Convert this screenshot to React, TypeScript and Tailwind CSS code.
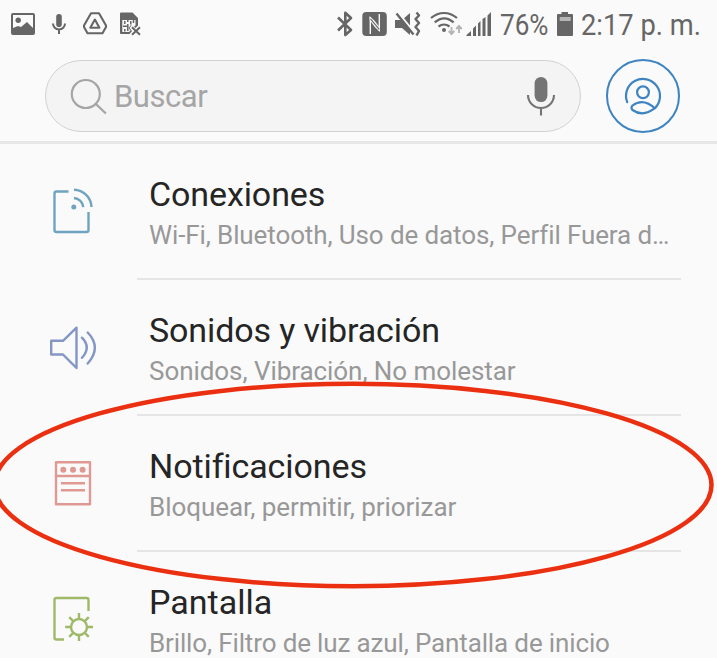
import type { ReactNode } from "react";

type Setting = { title: string; subtitle: string; icon: ReactNode; titleClass: string; subtitleClass: string };

const iconClass = "h-[56px] w-[56px] shrink-0 fill-none stroke-[2.4]";

const settings: Setting[] = [
  {
    title: "Conexiones",
    subtitle: "Wi-Fi, Bluetooth, Uso de datos, Perfil Fuera d…",
    titleClass: "tracking-[-0.1px]",
    subtitleClass: "tracking-[-0.11px]",
    icon: (
      <svg viewBox="0.5 0 56 56" className={`${iconClass} stroke-[#6fa3bf]`}>
        <path d="M23 7.5H11a2 2 0 0 0-2 2V46a2 2 0 0 0 2 2h30a2 2 0 0 0 2-2V28" />
        <path d="M28.5 5.7A18 18 0 0 1 46 23M28.5 14A10 10 0 0 1 37.8 23.2" />
        <circle cx="28.3" cy="23" r="2.5" className="fill-[#6fa3bf] stroke-none" />
      </svg>
    ),
  },
  {
    title: "Sonidos y vibración",
    subtitle: "Sonidos, Vibración, No molestar",
    titleClass: "tracking-[-0.12px]",
    subtitleClass: "tracking-[-0.06px]",
    icon: (
      <svg viewBox="0.5 0 56 56" className={`${iconClass} stroke-[#8396c6]`} strokeLinecap="round" strokeLinejoin="round">
        <path d="M5.7 20.8H17.5L31 7.7V48L17.5 34.5H5.7Z" />
        <path d="M36.5 17.7Q46 27.5 36.5 37.8M42.2 12.5Q56.5 27.5 42.2 43.5" />
      </svg>
    ),
  },
  {
    title: "Notificaciones",
    subtitle: "Bloquear, permitir, priorizar",
    titleClass: "tracking-[-0.1px]",
    subtitleClass: "tracking-[-0.05px]",
    icon: (
      <svg viewBox="0 0 56 56" className={`${iconClass} stroke-[#df9992]`} strokeLinejoin="round">
        <path d="M10 6.2H44V48.2H10ZM10 20H44M15 27.3H39M15 34.3H39" />
        <g className="fill-[#df9992] stroke-none">
          <circle cx="17.3" cy="13.7" r="3" />
          <circle cx="27" cy="13.7" r="3" />
          <circle cx="36.6" cy="13.7" r="3" />
        </g>
      </svg>
    ),
  },
  {
    title: "Pantalla",
    subtitle: "Brillo, Filtro de luz azul, Pantalla de inicio",
    titleClass: "",
    subtitleClass: "tracking-[-0.14px]",
    icon: (
      <svg viewBox="0.5 0 56 56" className={`${iconClass} stroke-[#9fb969]`}>
        <path d="M18.5 47.5H11a2 2 0 0 1-2-2V8a2 2 0 0 1 2-2H41a2 2 0 0 1 2 2V19" />
        <circle cx="33.5" cy="35" r="8" />
        <path d="M33.5 21v6M33.5 43v6M19.7 35h6M41.5 35h6M23.7 25.2l4 4M39.3 40.8l4 4M43.3 25.2l-4 4M27.7 40.8l-4 4" />
      </svg>
    ),
  },
];

function StatusBar() {
  return (
    <div className="flex h-12 items-start text-[#666]">
      <svg viewBox="0 0 150 48" className="h-12 w-[150px] shrink-0">
        <path fill="currentColor" fillRule="evenodd" d="M13 13H33a2 2 0 0 1 2 2V33a2 2 0 0 1-2 2H13a2 2 0 0 1-2-2V15a2 2 0 0 1 2-2ZM13 15V28L18 26L21 27L27 22L33 28V15Z" />
        <circle cx="18.2" cy="20.3" r="2.7" fill="currentColor" />
        <rect x="56.2" y="14" width="5.6" height="13" rx="2.8" fill="currentColor" />
        <path d="M53 23.5a6 6 0 0 0 12 0M59 29.5V34" fill="none" stroke="currentColor" strokeWidth="2" />
        <path d="M91 13.3H99L106 25.5V27L102.5 33.3H87.5L84 27V25.5ZM94.9 19.6L90.3 27.7H99.4Z" fill="none" stroke="currentColor" strokeWidth="2.1" strokeLinejoin="round" />
        <path fill="currentColor" d="M121 12.5H132.5L138 18V25.5L135.5 28L132 25L129.5 28L132 31L129.5 34H121q-1 0-1-1V13.5q0-1 1-1Z" />
        <path d="M122.3 20H135.5V25.5L133.5 27L131 25L128.5 28L130.5 30.5L129 32H122.3Z" fill="#fafafa" />
        <path d="M124.8 21V24M124.8 29V31.5M127.8 20V22M127.8 24V31M130.8 21V24.5M133.5 20V23M123 26.3H127" stroke="currentColor" strokeWidth="1.5" />
        <path d="M132 27.2L140 34.8M140 27.2L132 34.8" stroke="currentColor" strokeWidth="2" />
      </svg>
      <svg viewBox="335 0 160 48" className="ml-[185px] h-12 w-[160px] shrink-0" fill="none" stroke="currentColor">
        <path d="M338 17.5L351 30L345.3 35V12.8L351 18L338 30.5" strokeWidth="2.6" strokeLinejoin="round" />
        <rect x="362.3" y="12" width="24.5" height="24" rx="4" fill="currentColor" stroke="none" />
        <path d="M370.3 34V17M379.3 14V31" stroke="#fafafa" strokeWidth="1.4" />
        <path d="M369.6 16L374.8 21L380 28V32L374.8 27L369.6 20Z" fill="#fafafa" stroke="none" />
        <path d="M370.5 18.8L379.3 29.4" strokeWidth="1.1" />
        <path d="M395 20H402L410 13V35L402 28H395Z" fill="currentColor" stroke="none" />
        <path d="M398.5 13L415.5 34" stroke="#fafafa" strokeWidth="2" />
        <path d="M396.5 13.5L413.5 34.5" strokeWidth="2.4" />
        <path d="M416.5 12.5L419 15.5L415.5 19L419 23L415.5 27L419 31L416.5 35.5" strokeWidth="2.4" strokeLinejoin="round" />
        <path d="M431 18C439 11.3 449 11.3 457 18M434.7 22.4C441 17 447.5 17 453.6 22.4M438.5 26.5Q444 22.5 449.5 26.5" strokeWidth="2.2" />
        <circle cx="444" cy="30" r="2" fill="currentColor" stroke="none" />
        <path d="M451.5 27V34M448.7 31L451.5 34L454.3 31M459 33V26M456.2 29L459 26L461.8 29" stroke="#b5b5b5" strokeWidth="1.9" />
        <path d="M466.5 36V35L471 31V36ZM473 36V28.5L476 25.5V36ZM478 36V23.5L480.5 21V36ZM482.5 36V19L485.5 17V36ZM487.5 36V15.5L491 12V36Z" fill="currentColor" stroke="none" />
      </svg>
      <div className="ml-[5px] w-[50px] shrink-0">
        <span className="block w-max origin-left scale-x-[0.87] font-['Roboto'] text-[30px] leading-[50px]">76%</span>
      </div>
      <svg viewBox="0 0 18 48" className="ml-[6px] h-12 w-[18px] shrink-0">
        <path d="M5.5 12H12V14H16q1 0 1 1V35q0 1-1 1H2q-1 0-1-1V15q0-1 1-1H5.5Z" fill="currentColor" />
        <rect x="3.7" y="17" width="11" height="4" fill="#b5b5b5" />
      </svg>
      <div className="ml-[7px] w-[125px] shrink-0">
        <span className="block w-max origin-left scale-x-[0.91] font-['Roboto'] text-[30px] leading-[50px]">2:17 p. m.</span>
      </div>
    </div>
  );
}

function SearchHeader() {
  return (
    <header className="flex h-24 items-start border-b-[3px] border-[#e7e7e7] pt-[11px] pl-[45px]">
      <div className="mt-px flex h-[72px] w-[536px] items-center rounded-full border border-[#d2d2d2] bg-[#f4f4f4] pl-[24px]">
        <svg viewBox="0.5 0 40 40" className="h-10 w-10 shrink-0 fill-none stroke-[#a5a5a5] stroke-[2.2]">
          <circle cx="16.3" cy="18" r="14" />
          <path d="M26.2 27.9L36.4 37.5" />
        </svg>
        <span className="ml-[4px] font-['Roboto'] text-[31px] leading-none tracking-[-0.45px] text-[#a5a5a5]">Buscar</span>
        <svg viewBox="0 0 32 44" className="mr-[23px] ml-auto h-11 w-8 fill-none stroke-[#747474] stroke-[2.1]">
          <rect x="9.6" y="3" width="12.8" height="25" rx="6.4" className="fill-[#747474] stroke-none" />
          <path d="M3 21a13 13 0 0 0 26 0M16 34V41.5" />
        </svg>
      </div>
      <div className="ml-[25px] flex h-[74px] w-[74px] items-center justify-center rounded-full border-2 border-[#3d84c0]">
        <svg viewBox="0 0 40 40" className="h-10 w-10 fill-none stroke-[#3d84c0] stroke-[2.2]" strokeLinecap="round">
          <path d="M4.2 26.2A17 17 0 1 1 31.8 32.2" />
          <circle cx="20" cy="16.3" r="5.9" />
          <path d="M31.8 32.2Q20 41.5 9.5 34Q7.5 31.8 9.5 29.5Q20 21.5 31.8 32.2Z" />
        </svg>
      </div>
    </header>
  );
}

export default function App() {
  return (
    <main className="relative h-[658px] w-[717px] overflow-hidden bg-[#fafafa] font-['Roboto',sans-serif]">
      <StatusBar />
      <SearchHeader />
      {settings.map((item) => (
        <section key={item.title} className="flex h-[136px] items-center pl-[46px]">
          {item.icon}
          <div className="ml-[35px] flex h-full w-[544px] shrink-0 flex-col border-b-2 border-[#e5e5e5] pt-[29px] pl-3">
            <h2 className={`text-[34px] leading-[42px] whitespace-nowrap text-[#252525] ${item.titleClass}`}>{item.title}</h2>
            <p className={`mt-px text-[26px] leading-[38px] whitespace-nowrap text-[#989898] ${item.subtitleClass}`}>{item.subtitle}</p>
          </div>
        </section>
      ))}
      <svg viewBox="0 0 717 658" className="pointer-events-none absolute inset-0 h-[658px] w-[717px]">
        <ellipse cx="353" cy="485" rx="358.5" ry="101.2" fill="none" stroke="#ea3010" strokeWidth="4.5" />
      </svg>
    </main>
  );
}
